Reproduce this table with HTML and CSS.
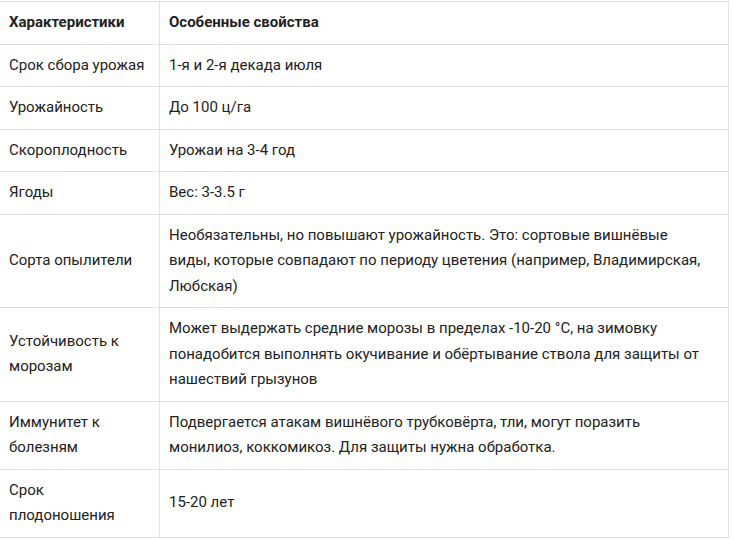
FILE: index.html
```html
<!DOCTYPE html>
<html lang="ru">
<head>
<meta charset="utf-8">
<link rel="stylesheet" href="styles.css">
</head>
<body>
<table class="specs">
  <colgroup><col class="c1"><col class="c2"></colgroup>
  <thead>
    <tr><th>Характеристики</th><th class="val">Особенные свойства</th></tr>
  </thead>
  <tbody>
    <tr><td>Срок сбора урожая</td><td class="val">1-я и 2-я декада июля</td></tr>
    <tr><td>Урожайность</td><td class="val">До 100 ц/га</td></tr>
    <tr><td>Скороплодность</td><td class="val">Урожаи на 3-4 год</td></tr>
    <tr><td>Ягоды</td><td class="val">Вес: 3-3.5 г</td></tr>
    <tr><td>Сорта опылители</td><td class="val">Необязательны, но повышают урожайность. Это: сортовые вишнёвые виды, которые совпадают по периоду цветения (например, Владимирская, Любская)</td></tr>
    <tr><td>Устойчивость к морозам</td><td class="val">Может выдержать средние морозы в пределах -10-20 °C, на зимовку понадобится выполнять окучивание и обёртывание ствола для защиты от нашествий грызунов</td></tr>
    <tr><td>Иммунитет к болезням</td><td class="val">Подвергается атакам вишнёвого трубковёрта, тли, могут поразить монилиоз, коккомикоз. Для защиты нужна обработка.</td></tr>
    <tr><td>Срок плодоношения</td><td class="val">15-20 лет</td></tr>
  </tbody>
</table>
</body>
</html>
```
FILE: styles.css
```css
html, body {
  margin: 0;
  padding: 0;
  background: #ffffff;
}
body {
  font-family: Roboto, "Liberation Sans", Arial, sans-serif;
  font-size: 15px;
  line-height: 1.7;
  color: #222222;
}
.specs {
  border-collapse: collapse;
  table-layout: fixed;
  width: 730px;
  margin: 1px 0 0 -1px;
}
.specs .c1 { width: 160px; }
.specs th,
.specs td {
  border: 1px solid #e1e1e4;
  padding: 8px 8px 8px 9px;
  text-align: left;
  vertical-align: middle;
}
.specs .val {
  padding-right: 16px;
}
.specs th {
  font-weight: 700;
}
```
